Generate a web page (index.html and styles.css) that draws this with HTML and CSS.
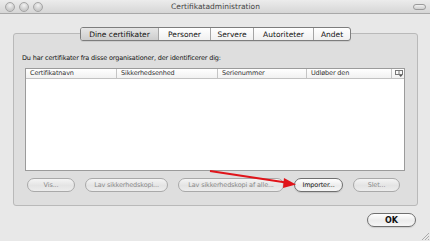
FILE: index.html
```html
<!DOCTYPE html>
<html>
<head>
<meta charset="utf-8">
<link rel="stylesheet" href="styles.css">
</head>
<body>
<div class="window">
  <div class="titlebar">
    <div class="lights"><span class="light"></span><span class="light"></span><span class="light"></span></div>
    <div class="title">Certifikatadministration</div>
    <div class="pill"></div>
  </div>
  <div class="main">
    <div class="tabs">
      <div class="tab sel t1">Dine certifikater</div>
      <div class="tab t2">Personer</div>
      <div class="tab t3">Servere</div>
      <div class="tab t4">Autoriteter</div>
      <div class="tab t5">Andet</div>
    </div>
    <div class="group">
      <div class="label">Du har certifikater fra disse organisationer, der identificerer dig:</div>
      <div class="table">
        <div class="thead">
          <div class="th c1">Certifikatnavn</div>
          <div class="th c2">Sikkerhedsenhed</div>
          <div class="th c3">Serienummer</div>
          <div class="th c4">Udløber den</div>
          <div class="th c5">
            <svg width="8" height="7" viewBox="0 0 8 7"><rect x="0.5" y="0.5" width="7" height="4" fill="none" stroke="#777" stroke-width="1"/><line x1="4" y1="0.5" x2="4" y2="4.5" stroke="#777"/><path d="M4 5 L7.5 5 L5.75 7 Z" fill="#555"/></svg>
          </div>
        </div>
      </div>
      <div class="buttons">
        <div class="btn dis b1">Vis...</div>
        <div class="btn dis b2">Lav sikkerhedskopi...</div>
        <div class="btn dis b3">Lav sikkerhedskopi af alle...</div>
        <div class="btn b4">Importer...</div>
        <div class="btn dis b5">Slet...</div>
      </div>
    </div>
    <div class="footer">
      <div class="btn ok">OK</div>
    </div>
  </div>
  <svg class="arrow" width="430" height="241" viewBox="0 0 430 241">
    <line x1="210" y1="171" x2="286" y2="182.5" stroke="#e0141a" stroke-width="2"/>
    <path d="M296 184.5 L284 178 L283 188 Z" fill="#e0141a"/>
  </svg>
  <svg class="grip" width="8" height="8" viewBox="0 0 8 8">
    <line x1="1" y1="8" x2="8" y2="1" stroke="#999" stroke-width="0.8"/>
    <line x1="4" y1="8" x2="8" y2="4" stroke="#999" stroke-width="0.8"/>
    <line x1="7" y1="8" x2="8" y2="7" stroke="#999" stroke-width="0.8"/>
  </svg>
</div>
</body>
</html>
```

FILE: styles.css
```css
* { box-sizing: border-box; }
html, body { margin: 0; padding: 0; }
body {
  width: 430px;
  height: 241px;
  overflow: hidden;
  background: #e8e8e8;
  font-family: "DejaVu Sans", Verdana, sans-serif;
  font-size: 6.5px;
  letter-spacing: -0.15px;
  color: #111;
}
.window {
  position: relative;
  width: 430px;
  height: 241px;
  background: #e8e8e8;
}
.titlebar {
  height: 14px;
  display: flex;
  align-items: center;
  justify-content: space-between;
  padding: 0 4px 0 5px;
  background: linear-gradient(#ececec, #d6d6d6);
  border-bottom: 1px solid #a8a8a8;
}
.lights { display: flex; gap: 4px; width: 60px; }
.light {
  width: 10px;
  height: 10px;
  border-radius: 50%;
  border: 1px solid #a5a5a5;
  background: radial-gradient(circle at 50% 30%, #f2f2f2, #c8c8c8 70%, #d8d8d8);
}
.title {
  color: #444;
  font-size: 7.5px;
  letter-spacing: 0;
}
.pill {
  width: 13px;
  height: 6px;
  border-radius: 3px;
  border: 1px solid #9a9a9a;
  background: linear-gradient(#f0f0f0, #cfcfcf);
  margin-left: 47px;
}
.main {
  display: flex;
  flex-direction: column;
  padding-top: 13px;
}
.tabs {
  position: relative;
  z-index: 1;
  align-self: center;
  display: flex;
  height: 14px;
  margin-left: 1px;
  border: 1px solid #7d7d7d;
  border-radius: 3px;
  background: linear-gradient(#ffffff, #f0f0f0);
  overflow: hidden;
  box-shadow: 0 1px 0 rgba(0,0,0,0.08);
}
.tab {
  display: flex;
  align-items: center;
  justify-content: center;
  font-size: 7.5px;
  letter-spacing: 0;
  color: #111;
  border-left: 1px solid #a5a5a5;
}
.tab:first-child { border-left: none; }
.tab.sel { background: linear-gradient(#e6e6e6, #cdcdcd); }
.t1 { width: 77px; }
.t2 { width: 52px; }
.t3 { width: 43px; }
.t4 { width: 60px; }
.t5 { width: 37px; }
.group {
  margin: -8px 0 0 13px;
  width: 405px;
  height: 173px;
  border: 1px solid #b9b9b9;
  border-radius: 3px;
  background: #dedede;
  padding: 20px 0 0 8px;
}
.label {
  height: 9px;
  line-height: 9px;
  color: #111;
}
.table {
  margin: 5px 0 0 3px;
  width: 380px;
  height: 103px;
  background: #fff;
  border: 1px solid #9b9b9b;
}
.thead {
  display: flex;
  height: 10px;
  border-bottom: 1px solid #c2c2c2;
  background: linear-gradient(#ffffff, #f1f1f1);
}
.th {
  line-height: 9px;
  padding-left: 4px;
  color: #333;
  border-right: 1px solid #c5c5c5;
}
.c1 { width: 91px; }
.c2 { width: 101px; }
.c3 { width: 89px; }
.c4 { width: 85px; }
.c5 { flex: 1; border-right: none; padding-left: 3px; display: flex; align-items: center; }
.buttons {
  display: flex;
  gap: 10px;
  margin: 7px 0 0 5px;
}
.btn {
  height: 14px;
  border-radius: 7px;
  border: 1px solid #6f6f6f;
  background: linear-gradient(#ffffff, #ececec 55%, #f6f6f6);
  display: flex;
  align-items: center;
  justify-content: center;
  color: #111;
  box-shadow: 0 1px 1px rgba(0,0,0,0.12);
}
.btn.dis {
  border-color: #a9a9a9;
  color: #8a8a8a;
  background: linear-gradient(#f4f4f4, #e4e4e4 55%, #ececec);
  box-shadow: none;
}
.b1 { width: 48px; }
.b2 { width: 83px; }
.b3 { width: 106px; }
.b4 { width: 49px; }
.b5 { width: 47px; }
.footer {
  display: flex;
  justify-content: flex-end;
  padding: 7px 14px 0 0;
}
.ok {
  width: 49px;
  font-size: 8px;
  font-weight: bold;
  letter-spacing: 0;
}
.arrow {
  position: absolute;
  left: 0;
  top: 0;
  pointer-events: none;
}
.grip {
  position: absolute;
  right: 1px;
  bottom: 1px;
}
```
